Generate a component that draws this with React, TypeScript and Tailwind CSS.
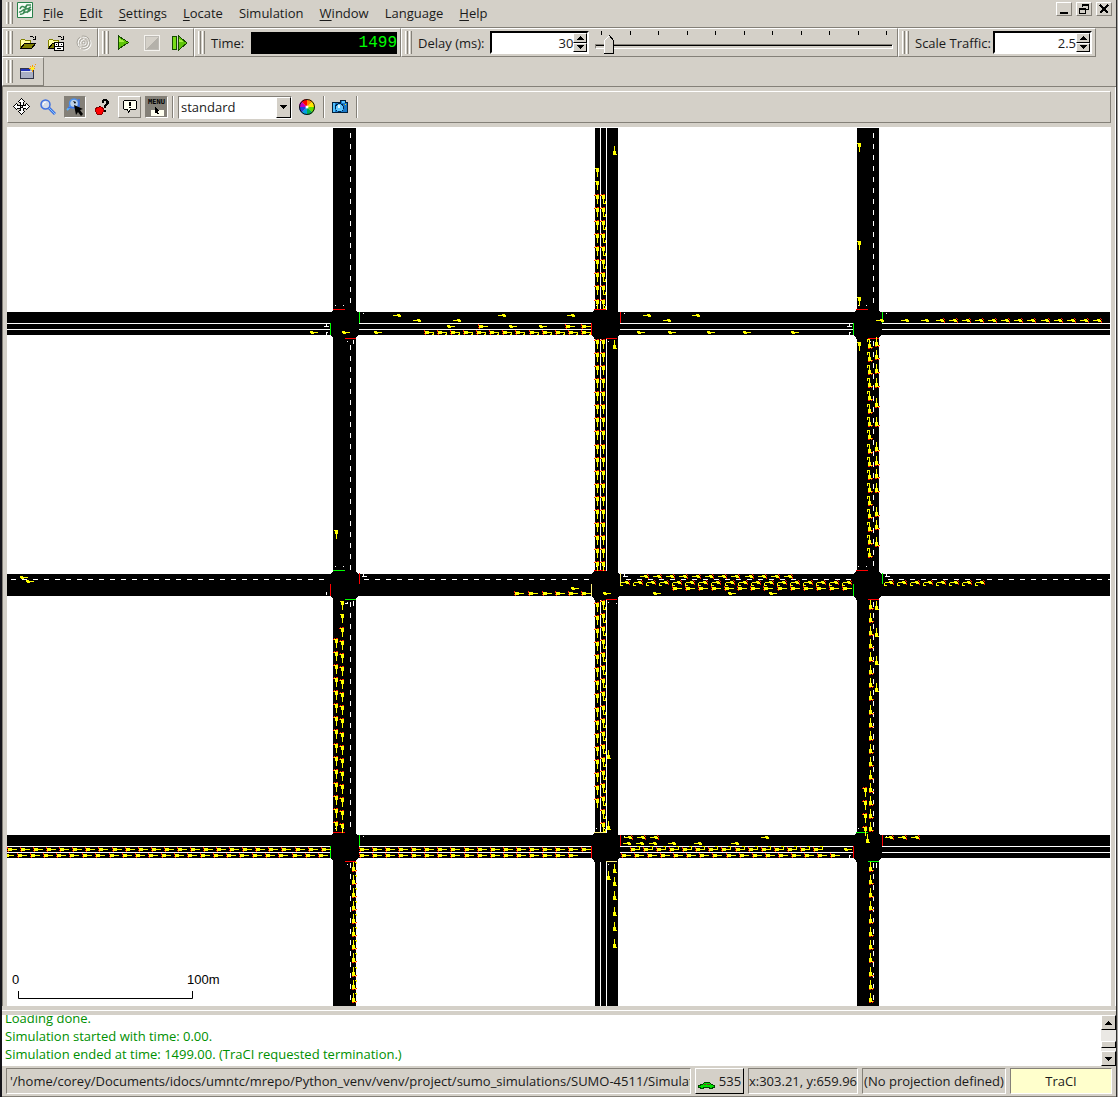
import React from "react";

type Dir = "E" | "S" | "W" | "N";
type Lane = {
  dir: Dir;
  lane: number;
  from?: number;
  count?: number;
  at?: number[];
  brake?: boolean;
  hook?: 1 | -1;
};

const STEP = 13.07;
const ANGLE: Record<Dir, number> = { E: 0, S: 90, W: 180, N: -90 };

const LANES: Lane[] = [
  { dir: "S", lane: 597, at: [168, 181] },
  { dir: "S", lane: 597, from: 195, count: 9, brake: true },
  { dir: "S", lane: 603, from: 195, count: 9, brake: true, hook: -1 },
  { dir: "S", lane: 597, from: 340, count: 18, brake: true },
  { dir: "S", lane: 603, from: 340, count: 18, brake: true },
  { dir: "S", lane: 597, from: 603, count: 16, brake: true },
  { dir: "S", lane: 603, from: 601, count: 18, brake: true, hook: -1 },
  { dir: "N", lane: 615, at: [155, 349, 873, 886, 900, 916, 931, 948] },
  { dir: "N", lane: 609, at: [759, 830, 880] },
  { dir: "S", lane: 336, at: [530] },
  { dir: "S", lane: 336, from: 639, count: 15, brake: true },
  { dir: "S", lane: 342, at: [601, 614] },
  { dir: "S", lane: 342, from: 628, count: 16, brake: true },
  { dir: "N", lane: 354, from: 871, count: 11, brake: true, hook: 1 },
  { dir: "S", lane: 859, at: [143, 241, 297, 342] },
  { dir: "N", lane: 870, from: 348, count: 17, brake: true, hook: -1 },
  { dir: "N", lane: 877, at: [346, 359, 373, 387, 407, 426, 451, 465, 478, 492, 516, 529, 546], brake: true },
  { dir: "N", lane: 871, from: 609, count: 18, brake: true },
  { dir: "N", lane: 877, at: [610, 637, 665, 692] },
  { dir: "S", lane: 865, from: 788, count: 4, brake: true },
  { dir: "N", lane: 868, at: [843] },
  { dir: "N", lane: 871, from: 871, count: 11, brake: true },

  { dir: "W", lane: 315, at: [401, 506, 575, 651, 700] },
  { dir: "W", lane: 320, at: [421, 461, 671, 884] },
  { dir: "E", lane: 332, at: [310, 342, 374, 637, 668, 707, 743, 791] },
  { dir: "E", lane: 326, at: [447, 509, 539] },
  { dir: "E", lane: 326, at: [479, 566, 582], brake: true },
  { dir: "E", lane: 332, from: 425, count: 13, brake: true, hook: 1 },
  { dir: "W", lane: 320, at: [909, 929] },
  { dir: "W", lane: 320, from: 944, count: 13, brake: true },

  { dir: "E", lane: 577, at: [20] },
  { dir: "E", lane: 581, at: [26] },
  { dir: "E", lane: 593, at: [515, 529, 543, 556, 569, 582], brake: true },
  { dir: "E", lane: 588, at: [571] },
  { dir: "E", lane: 593, at: [603, 653, 728, 769] },
  { dir: "W", lane: 576, from: 648, count: 12, brake: true },
  { dir: "W", lane: 582, from: 629, count: 18, brake: true, hook: -1 },
  { dir: "E", lane: 588, from: 673, count: 14, brake: true },
  { dir: "W", lane: 582, from: 893, count: 8, brake: true, hook: -1 },

  { dir: "E", lane: 849, from: 8, count: 25, brake: true },
  { dir: "E", lane: 855, from: 5, count: 25, brake: true },
  { dir: "E", lane: 849, from: 360, count: 17, brake: true },
  { dir: "E", lane: 849, at: [582], brake: true },
  { dir: "E", lane: 855, from: 360, count: 17, brake: true },
  { dir: "W", lane: 837, at: [632, 645, 658, 893, 906, 919], brake: true },
  { dir: "W", lane: 837, at: [769] },
  { dir: "W", lane: 843, at: [631, 644, 657, 676, 702, 739] },
  { dir: "E", lane: 849, from: 631, count: 15, brake: true, hook: -1 },
  { dir: "E", lane: 849, at: [844] },
  { dir: "E", lane: 855, from: 622, count: 17, brake: true },
];

const RED = "#ff0000";
const GREEN = "#00ff00";
const AMBER = "#fff080";

type Junction = { x: number; y: number; top: string; right: string; bottom: string; left: string };

const JUNCTIONS: Junction[] = [
  { x: 333, y: 312, top: RED, right: GREEN, bottom: RED, left: GREEN },
  { x: 595, y: 312, top: RED, right: RED, bottom: RED, left: RED },
  { x: 857, y: 312, top: RED, right: GREEN, bottom: RED, left: GREEN },
  { x: 333, y: 573, top: GREEN, right: RED, bottom: GREEN, left: RED },
  { x: 595, y: 573, top: RED, right: AMBER, bottom: RED, left: AMBER },
  { x: 857, y: 573, top: RED, right: GREEN, bottom: RED, left: GREEN },
  { x: 333, y: 835, top: RED, right: GREEN, bottom: RED, left: GREEN },
  { x: 595, y: 835, top: AMBER, right: RED, bottom: AMBER, left: RED },
  { x: 857, y: 835, top: GREEN, right: RED, bottom: GREEN, left: RED },
];

function bodyPath(dir: Dir, brake?: boolean) {
  if (dir === "S" || dir === "N") return "M0-2h4v1h5v1h-5v1h-3v1h-1z";
  if (dir === "E" && brake) return "M0-1h4v1h5v1h-5v1h-4z";
  return "M0-1h3v1h5v1h-4v1h-3v-1h-1z";
}

function Vehicle({ x, y, dir, brake, hook }: { x: number; y: number; dir: Dir; brake?: boolean; hook?: 1 | -1 }) {
  return (
    <g transform={`translate(${x} ${y}) rotate(${ANGLE[dir]})`}>
      {brake && <path fill="#ff2000" d="M-1-2h1v2h-1zM-1 1h1v1h-1zM0 2h1v1h-1z" />}
      <path fill="#ffff00" d={bodyPath(dir, brake)} />
      {hook && <path fill="#ffff00" d={hook === 1 ? "M8 1h1v2h-2v-1h1z" : "M8-2h-2v-1h3v3h-1z"} />}
    </g>
  );
}

function Traffic() {
  return (
    <g>
      {LANES.flatMap((l, i) => {
        const spots = l.at ?? Array.from({ length: l.count ?? 0 }, (_, k) => Math.round((l.from ?? 0) + k * STEP));
        const flat = l.dir === "E" || l.dir === "W";
        return spots.map((p) => (
          <Vehicle
            key={`${i}-${p}`}
            x={flat ? p : l.lane}
            y={flat ? l.lane + (l.dir === "W" ? 1 : 0) : p}
            dir={l.dir}
            brake={l.brake}
            hook={l.hook}
          />
        ));
      })}
    </g>
  );
}

function NetworkMap() {
  return (
    <svg
      viewBox="7 127 1104 879"
      preserveAspectRatio="xMinYMin slice"
      className="block h-full w-full"
      role="img"
      aria-label="Road network"
    >
      <rect x="7" y="127" width="1104" height="879" fill="#fff" />
      <path
        fill="#000"
        d="M333 128h23v878h-23zM595 128h23v878h-23zM857 128h22v878h-22zM7 312h1103v23H7zM7 574h1103v22H7zM7 835h1103v23H7z"
      />
      <path
        fill="#fff"
        d="M600 128h1v878h-1zM606 128h1v878h-1zM7 323h1103v1H7zM7 329h1103v1H7zM7 846h1103v1H7zM7 852h1103v1H7z"
      />
      <path
        stroke="#fff"
        fill="none"
        strokeDasharray="5 6"
        d="M350.5 133V309M350.5 345V571M350.5 602V832M350.5 863V1006M873.5 133V309M873.5 341V571M873.5 602V832M873.5 863V1006M11 579.5H331M364 579.5H592M626 579.5H854M888 579.5H1110"
      />
      {JUNCTIONS.map((j) => {
        const shift = j.x === 333 ? 0 : -1;
        return (
          <g key={`${j.x}-${j.y}`} transform={`translate(${j.x + shift} ${j.y})`}>
            <path fill="#000" d="M0-2h23v1h1v1h1v1h1v21h-1v2h-1v1h-1v2H0v-2h-1v-1h-1v-1h-1V1h1V0h1v-1h1z" />
            <rect fill={j.top} x="0" y="-3" width="12" height="1" />
            <rect fill={j.right} x="26" y="0" width="1" height="11" />
            <rect fill={j.bottom} x="12" y="26" width="11" height="1" />
            <rect fill={j.left} x="-3" y="11" width="1" height="12" />
            <path fill="#fff" d="M2-7h1v1H2zM10-7h1v1h-1zM30 1h1v1h-1zM14 29h1v1h-1z" />
          </g>
        );
      })}
      <path
        fill="#fff"
        d="M326 324h1v2h2v1h-5v-1h2zM326 332h2v1h-1v2h-1zM849 324h1v2h2v1h-5v-1h2zM849 332h2v1h-1v2h-1zM363 575h1v1h3v1h-5v-1h1zM624 575h1v1h3v1h-5v-1h1zM886 575h1v1h3v1h-5v-1h1zM326 592h1v3h-1zM353 340h1v4h-1zM353 601h1v5h-1zM345 603h3v1h-3zM876 601h1v5h-1zM876 863h1v5h-1zM849 855h2v1h-1v2h-1zM616 603h1v1h-1z"
      />
      <Traffic />
      <path fill="none" stroke="#000" d="M18.5 991V998.5H192.5V991" />
      <g fill="#000" fontFamily="'Liberation Sans', sans-serif" fontSize="13">
        <text x="12" y="984">0</text>
        <text x="187" y="984">100m</text>
      </g>
    </svg>
  );
}

const Svg = ({ children, w = 16, h = 16 }: { children: React.ReactNode; w?: number; h?: number }) => (
  <svg width={w} height={h} viewBox={`0 0 ${w} ${h}`} shapeRendering="crispEdges" aria-hidden="true">
    {children}
  </svg>
);

const Folder = () => (
  <>
    <path fill="#ffffa0" stroke="#808000" d="M.5 13.5V5.5l1-1h3l1 1h5v3" />
    <path fill="#808000" stroke="#000" d="M.5 13.5l4-5h11l-4 5z" />
    <path fill="none" stroke="#000" d="M9.5 2.5l1-1h2l2 2M15.5 1v3.500h-3" />
  </>
);

const OpenIcon = () => (
  <Svg><Folder /></Svg>
);

const OpenNetIcon = () => (
  <Svg>
    <Folder />
    <path fill="#fff" stroke="#000" d="M6.500 7.500h9v8h-9z" />
    <path fill="#000" d="M7 11h8v1H7zM10 8h1v3h-1zM8 9h1v1H8zM13 9h1v1h-1zM9 13h4v1H9z" />
  </Svg>
);

const ReloadIcon = () => (
  <svg width="16" height="16" viewBox="0 0 16 16" fill="none" aria-hidden="true">
    <g stroke="#fff" transform="translate(1 1)">
      <circle cx="7.500" cy="7.500" r="6.500" strokeDasharray="12 2" />
      <circle cx="7.500" cy="7.500" r="4" strokeDasharray="8 2" />
      <circle cx="7.500" cy="7.500" r="1.500" />
    </g>
    <g stroke="#aaa79f">
      <circle cx="7.500" cy="7.500" r="6.500" strokeDasharray="12 2" />
      <circle cx="7.500" cy="7.500" r="4" strokeDasharray="8 2" />
      <circle cx="7.500" cy="7.500" r="1.500" />
    </g>
  </svg>
);

const PlayIcon = () => (
  <Svg w={12} h={16}>
    <path fill="#5fc40a" stroke="#164a00" d="M.5 1v13L10.500 7.500z" />
    <path fill="#a4f040" d="M1 3l5 3.500H1z" />
  </Svg>
);

const StopIcon = () => (
  <Svg>
    <path fill="#d4d0c8" d="M0 0h16v16H0z" />
    <path fill="#b4b1aa" d="M2 14L14 2v12z" />
    <path fill="none" stroke="#f4f2ee" d="M.5 .5h15v15H.5z" />
    <path fill="none" stroke="#bdbab4" d="M1.500 1.500h13v13h-13z" />
  </Svg>
);

const StepIcon = () => (
  <Svg>
    <path fill="#78dc18" stroke="#164a00" d="M.5 1.500h4v13h-4z" />
    <path fill="#5fc40a" stroke="#164a00" d="M6.500 1v14L15 8z" />
    <path fill="#a4f040" d="M7 3.500l4 3H7z" />
  </Svg>
);

const NewViewIcon = () => (
  <Svg>
    <path fill="#a9afc4" stroke="#30344a" d="M.5 4.500h13v10H.5z" />
    <path fill="#2434b8" d="M1 5h9v2H1z" />
    <path fill="#dfe3ee" d="M1 7h12v1H1z" />
    <path fill="#ff9a00" d="M12 1h1v2h-1zM12 6h1v2h-1zM9 4h2v1H9zM14 4h1v1h-1zM14 2h1v1h-1zM15 0h1v1h-1zM10 2h1v1h-1z" />
    <path fill="#ffee20" d="M11 3h3v3h-3z" />
  </Svg>
);

const MoveIcon = () => (
  <Svg w={18} h={18}>
    <path
      fill="#fff"
      stroke="#000"
      d="M8.500 .5l3 3-1.500 1v2.500h2.500l1-1.500 3 3-3 3-1-1.500h-2.500v2.500l1.500 1-3 3-3-3 1.500-1v-2.500h-2.500l-1 1.500-3-3 3-3 1 1.500h2.500v-2.500l-1.500-1z"
    />
    <path fill="#d4d0c8" stroke="#000" d="M7.500 7.500h2v2h-2z" />
  </Svg>
);

const ZoomIcon = () => (
  <svg width="16" height="16" viewBox="0 0 16 16" aria-hidden="true">
    <path stroke="#3f6fe0" strokeWidth="3" d="M9 9l6 6" />
    <path stroke="#7fc8ff" strokeWidth="1" d="M9 9l6 6" />
    <circle cx="5.500" cy="5.500" r="4.500" fill="#d5dce8" stroke="#3f6fe0" strokeWidth="1.500" />
    <path stroke="#fff" fill="none" d="M3 6a3 3 0 0 1 3-3" />
  </svg>
);

const ZoomSelectIcon = () => (
  <svg width="18" height="18" viewBox="0 0 18 18" aria-hidden="true">
    <path stroke="#5cb4ff" strokeWidth="2" d="M5 8l-4 4" />
    <circle cx="8" cy="5.500" r="4.500" fill="#bcd0e6" stroke="#4a90f0" strokeWidth="1.500" />
    <path stroke="#3f6fe0" strokeWidth="1.500" d="M13 1v8M2 9.500h10" />
    <path fill="#000" d="M7 3l3 1-1 2zM8 7l9 4-3 1 3 4-2 2-3-4-2 3z" />
  </svg>
);

const LocateIcon = () => (
  <Svg>
    <path fill="#ff0000" stroke="#900000" d="M2.500 8.500h2l1-1h1l1 1h1l1 2v2l-2 3h-4l-2-3v-2z" />
    <path stroke="#000" fill="none" d="M5.500 8V6.500" />
    <path fill="#000" d="M8 1h1V0h4v1h1v1h1v3h-1v1h-1v1h-1v2h-2V6h1V5h1V2h-2v2H8zM10 11h2v2h-2z" />
  </Svg>
);

const BubbleIcon = () => (
  <Svg>
    <path fill="#fffff0" stroke="#000" d="M2.500 1.500h11l1 1v7l-1 1h-5l-2 3-1-3h-3l-1-1v-7z" />
    <path fill="#000" d="M7 3h2v4H7zM7 8h2v1H7z" />
  </Svg>
);

const PointerIcon = () => (
  <Svg w={16} h={10}>
    <path fill="#fffff0" d="M2 3h13v6H2z" />
    <path fill="#000" d="M6 0l5 4H9l1 3H8L7 5 6 6z" />
  </Svg>
);

const WHEEL = ["#ff8c00", "#ffe800", "#60e000", "#00b050", "#00a0e0", "#2040e0", "#c000c0", "#ff0000"];

const ColorWheelIcon = () => (
  <svg width="18" height="18" viewBox="0 0 18 18" aria-hidden="true">
    {WHEEL.map((c, i) => (
      <path key={c} fill={c} d="M9 9V1a8 8 0 0 1 5.660 2.340z" transform={`rotate(${i * 45} 9 9)`} />
    ))}
    <circle cx="9" cy="9" r="7.500" fill="none" stroke="#111" />
    <circle cx="9" cy="9" r="1.500" fill="#fff" />
  </svg>
);

const CameraIcon = () => (
  <Svg>
    <path fill="#1878c8" stroke="#00203c" d="M.5 3.500h8v-2h5v2h2v10H.5z" />
    <path fill="#50c0ff" d="M10 2h3v2h-3zM1 4h2v9H1z" />
    <circle cx="7.500" cy="8.500" r="4" fill="#60c8ff" stroke="#002850" />
    <path fill="#e0f8ff" d="M6 6h2v3H6z" />
    <path fill="#ffe000" d="M13 5h1v1h-1z" />
  </Svg>
);

const CarIcon = () => (
  <Svg w={17} h={9}>
    <path fill="#00e000" stroke="#004000" d="M.5 6.500v-2l4-1 2-2h5l2 2 3 1v2h-2v1h-3v-1h-6v1h-3v-1z" />
    <path fill="#803030" d="M6 3h2v1H6zM9 3h3v1H9z" />
  </Svg>
);

const LogoIcon = () => (
  <svg width="16" height="16" viewBox="0 0 16 16" aria-hidden="true">
    <path fill="#f4fbf4" stroke="#28804a" d="M.5 .5h15v15H.5z" />
    <path
      stroke="#3a8a54"
      fill="none"
      strokeWidth="1.500"
      d="M3 7c1-3 3-3 4-2s2-1 3-2l4 0M2 10c3 1 4-4 7-3 2 0 3-1 5-2M3 12c3 1 4-2 6-2s3 0 5-3M10 3l-4 9M13 5l-3 6"
    />
  </svg>
);

const Grip = () => (
  <div className="flex shrink-0 gap-px self-stretch py-0.5" aria-hidden="true">
    <div className="w-[3px] border-r border-l border-l-white border-r-[#848078]" />
    <div className="w-[3px] border-r border-l border-l-white border-r-[#848078]" />
  </div>
);

const DockBar = ({ children, className = "" }: { children: React.ReactNode; className?: string }) => (
  <div
    className={`flex items-center border border-t-white border-r-[#848078] border-b-[#848078] border-l-white pl-[3px] ${className}`}
  >
    <Grip />
    {children}
  </div>
);

const ToolButton = ({ label, children, disabled }: { label: string; children: React.ReactNode; disabled?: boolean }) => (
  <button type="button" aria-label={label} disabled={disabled} className="flex h-6 w-7 items-center justify-center">
    {children}
  </button>
);

const Divider = () => <div className="h-[22px] w-[2px] border-r border-l border-l-[#848078] border-r-white" />;

const Arrow = ({ up }: { up?: boolean }) => (
  <Svg w={7} h={4}>
    <path fill="#000" d={up ? "M3 0h1v1h1v1h1v1h1v1H0V3h1V2h1V1h1z" : "M0 0h7v1H6v1H5v1H4v1H3V3H2V2H1V1H0z"} />
  </Svg>
);

const RAISED = "border border-t-white border-r-black border-b-black border-l-white bg-[#d4d0c8]";

function Spinner({ id, value }: { id: string; value: string }) {
  return (
    <div className="flex h-[23px] w-[99px] border-2 border-t-black border-r-white border-b-white border-l-black bg-white">
      <input id={id} defaultValue={value} className="min-w-0 flex-1 bg-white text-right outline-none" />
      <div className="flex w-[14px] flex-col">
        <button type="button" aria-label="Increase" className={`flex flex-1 items-center justify-center ${RAISED}`}>
          <Arrow up />
        </button>
        <button type="button" aria-label="Decrease" className={`flex flex-1 items-center justify-center ${RAISED}`}>
          <Arrow />
        </button>
      </div>
    </div>
  );
}

function DelaySlider() {
  return (
    <div className="relative ml-[6px] h-6 min-w-0 flex-1">
      <div className="flex justify-between px-[6px]" aria-hidden="true">
        {Array.from({ length: 11 }, (_, i) => (
          <div key={i} className="h-1 w-px bg-black" />
        ))}
      </div>
      <div className="mt-[9px] h-[5px] border border-t-[#848078] border-r-white border-b-white border-l-[#848078]">
        <div className="h-px bg-black" />
      </div>
      <div className="absolute top-1 left-[9px]" aria-hidden="true">
        <Svg w={11} h={19}>
          <path fill="#d4d0c8" d="M0 5l5-5 5 5v14H0z" />
          <path fill="none" stroke="#fff" d="M.5 18V5.500l5-5" />
          <path fill="none" stroke="#000" d="M5.500 .5l4 5v13H0" />
        </Svg>
      </div>
      <input
        type="range"
        aria-label="Delay"
        min={0}
        max={1000}
        defaultValue={30}
        className="absolute inset-0 h-full w-full opacity-0"
      />
    </div>
  );
}

const MENU: [string, string, string][] = [
  ["", "F", "ile"],
  ["", "E", "dit"],
  ["", "S", "ettings"],
  ["", "L", "ocate"],
  ["Simulation", "", ""],
  ["", "W", "indow"],
  ["Langua", "g", "e"],
  ["", "H", "elp"],
];

const WINDOW_BUTTON =
  "flex h-[14px] w-4 items-center justify-center border border-t-white border-r-[#848078] border-b-[#848078] border-l-white";

function MenuBar() {
  return (
    <header className="flex h-7 items-start border-b border-[#848078] pl-1">
      <div className="flex h-[26px]"><Grip /></div>
      <div className="mt-[2px] ml-1"><LogoIcon /></div>
      <nav className="ml-[10px] flex h-[26px] items-center gap-4">
        {MENU.map(([a, key, b]) => (
          <button type="button" key={a + key + b}>
            {a}
            <span className="underline underline-offset-2">{key}</span>
            {b}
          </button>
        ))}
      </nav>
      <div className="mt-[2px] mr-1 ml-auto flex gap-1">
        <button type="button" aria-label="Minimize" className={WINDOW_BUTTON}>
          <Svg w={12} h={12}><path fill="#000" d="M2 9h8v2H2z" /></Svg>
        </button>
        <button type="button" aria-label="Restore" className={WINDOW_BUTTON}>
          <Svg w={12} h={12}>
            <path fill="none" stroke="#000" d="M4.500 4V1.500h6v5H8M4 2.500h7M1.500 5.500h6v5h-6zM1 6.500h7" />
          </Svg>
        </button>
        <button type="button" aria-label="Close" className={WINDOW_BUTTON}>
          <Svg w={12} h={12}><path stroke="#000" strokeWidth="2" d="M2 2l8 8M10 2l-8 8" /></Svg>
        </button>
      </div>
    </header>
  );
}

function ViewToolbar() {
  return (
    <div className="flex h-8 items-center border border-t-white border-r-[#848078] border-b-[#848078] border-l-white">
      <ToolButton label="Recenter"><MoveIcon /></ToolButton>
      <button type="button" aria-label="Zoom" className="flex h-6 w-6 items-center justify-center"><ZoomIcon /></button>
      <button
        type="button"
        aria-label="Zoom style"
        className="ml-1 flex h-[22px] w-[22px] items-center justify-center border border-t-[#848078] border-r-white border-b-white border-l-[#848078] bg-[#848078]"
      >
        <ZoomSelectIcon />
      </button>
      <button type="button" aria-label="Locate" className="ml-1 flex h-6 w-6 items-center justify-center"><LocateIcon /></button>
      <button
        type="button"
        aria-label="Show tooltips"
        className="ml-1 flex h-[22px] w-[23px] items-center justify-center border border-t-white border-r-[#848078] border-b-[#848078] border-l-white"
      >
        <BubbleIcon />
      </button>
      <button
        type="button"
        className="ml-1 flex h-[22px] w-[23px] flex-col items-center justify-center border border-t-[#848078] border-r-white border-b-white border-l-[#848078] bg-[#848078] font-['DejaVu_Sans_Mono',monospace] text-[7px] leading-[9px] font-bold text-black"
      >
        MENU
        <PointerIcon />
      </button>
      <div className="ml-1"><Divider /></div>
      <div className="relative ml-1 h-[23px] w-[114px]">
        <select
          aria-label="Coloring scheme"
          className="h-full w-full appearance-none rounded-none border border-t-[#848078] border-r-white border-b-white border-l-[#848078] bg-white pl-[2px] outline-none"
        >
          <option>standard</option>
        </select>
        <div className={`pointer-events-none absolute top-px right-px flex h-[21px] w-[15px] items-center justify-center ${RAISED}`}>
          <Arrow />
        </div>
      </div>
      <button type="button" aria-label="Edit coloring" className="ml-[3px] flex h-6 w-6 items-center justify-center"><ColorWheelIcon /></button>
      <div className="ml-1"><Divider /></div>
      <button type="button" aria-label="Snapshot" className="ml-[3px] flex h-6 w-6 items-center justify-center"><CameraIcon /></button>
      <div className="ml-1"><Divider /></div>
    </div>
  );
}

function ScrollBar() {
  return (
    <div className="flex w-[15px] flex-col bg-[#eae8e4]">
      <button type="button" aria-label="Scroll up" className={`flex h-[15px] items-center justify-center ${RAISED}`}><Arrow up /></button>
      <div className="flex-1" />
      <div className={`h-[7px] ${RAISED}`} />
      <div className="h-[3px]" />
      <button type="button" aria-label="Scroll down" className={`flex h-[15px] items-center justify-center ${RAISED}`}><Arrow /></button>
    </div>
  );
}

const SUNKEN = "flex h-[26px] items-center border border-t-[#848078] border-r-white border-b-white border-l-[#848078]";

export default function App() {
  return (
    <div className="flex h-screen border-r border-l-2 border-l-[#14141a] border-r-[#a8a6a2] bg-[#d4d0c8] font-['Open_Sans','Noto_Sans',sans-serif] text-[13px] leading-[18px] text-[#1a1a1a]">
      <div className="flex min-w-0 flex-1 flex-col border-r border-[#303030]">
        <MenuBar />
        <div className="flex h-[29px]">
          <DockBar className="w-24">
            <div className="ml-px flex">
              <ToolButton label="Open simulation"><OpenIcon /></ToolButton>
              <ToolButton label="Open network"><OpenNetIcon /></ToolButton>
              <ToolButton label="Reload" disabled><ReloadIcon /></ToolButton>
            </div>
          </DockBar>
          <DockBar className="w-24">
            <div className="ml-px flex">
              <ToolButton label="Run"><PlayIcon /></ToolButton>
              <ToolButton label="Stop" disabled><StopIcon /></ToolButton>
              <ToolButton label="Step"><StepIcon /></ToolButton>
            </div>
          </DockBar>
          <DockBar className="w-[207px]">
            <label htmlFor="time" className="ml-[6px]">Time:</label>
            <output
              id="time"
              className="mr-[3px] ml-auto h-[22px] w-[146px] bg-black text-right font-['Liberation_Mono',monospace] text-[16px] leading-[22px] text-[#00ff00]"
            >
              1499
            </output>
          </DockBar>
          <DockBar className="min-w-0 flex-1">
            <label htmlFor="delay" className="mr-[6px] ml-[6px] whitespace-nowrap">Delay (ms):</label>
            <Spinner id="delay" value="30" />
            <DelaySlider />
            <div className="w-1" />
          </DockBar>
          <DockBar className="w-[198px]">
            <label htmlFor="scale" className="ml-[6px] whitespace-nowrap">Scale Traffic:</label>
            <div className="mr-[3px] ml-auto"><Spinner id="scale" value="2.5" /></div>
          </DockBar>
          <div className="w-5" />
        </div>
        <div className="flex h-[30px] border-b border-[#848078]">
          <DockBar className="w-[42px]">
            <button type="button" aria-label="New view" className="ml-[3px] flex h-6 w-6 items-center justify-center"><NewViewIcon /></button>
          </DockBar>
        </div>
        <main className="flex min-h-0 flex-1 flex-col border-r border-l border-l-[#848078] border-r-white px-1 pt-1">
          <ViewToolbar />
          <div className="mt-1 min-h-0 flex-1"><NetworkMap /></div>
        </main>
        <div className="flex h-[9px] flex-col justify-center" aria-hidden="true"><div className="h-px bg-white" /></div>
        <section className="flex h-[51px] bg-white">
          <div className="flex min-w-0 flex-1 flex-col justify-end overflow-hidden pb-[3px] pl-[3px] text-[#008f00]">
            <p>Loading done.</p>
            <p>Simulation started with time: 0.00.</p>
            <p>Simulation ended at time: 1499.00. (TraCI requested termination.)</p>
          </div>
          <ScrollBar />
        </section>
        <footer className="flex h-[31px] items-start gap-1 border-b border-[#848078] px-1 pt-[2px]">
          <div className={`min-w-0 flex-1 overflow-hidden pl-[3px] whitespace-nowrap ${SUNKEN}`}>
            '/home/corey/Documents/idocs/umntc/mrepo/Python_venv/venv/project/sumo_simulations/SUMO-4511/Simulation'
          </div>
          <button type="button" className={`flex h-[26px] w-[49px] items-center justify-center gap-1 ${RAISED}`}>
            <span className="mt-2"><CarIcon /></span>
            535
          </button>
          <div className={`w-[110px] justify-center whitespace-nowrap ${SUNKEN}`}>x:303.21, y:659.96</div>
          <div className={`w-36 justify-center whitespace-nowrap ${SUNKEN}`}>(No projection defined)</div>
          <div className={`w-[102px] justify-center bg-[#ffffcc] ${SUNKEN}`}>TraCI</div>
        </footer>
      </div>
    </div>
  );
}
